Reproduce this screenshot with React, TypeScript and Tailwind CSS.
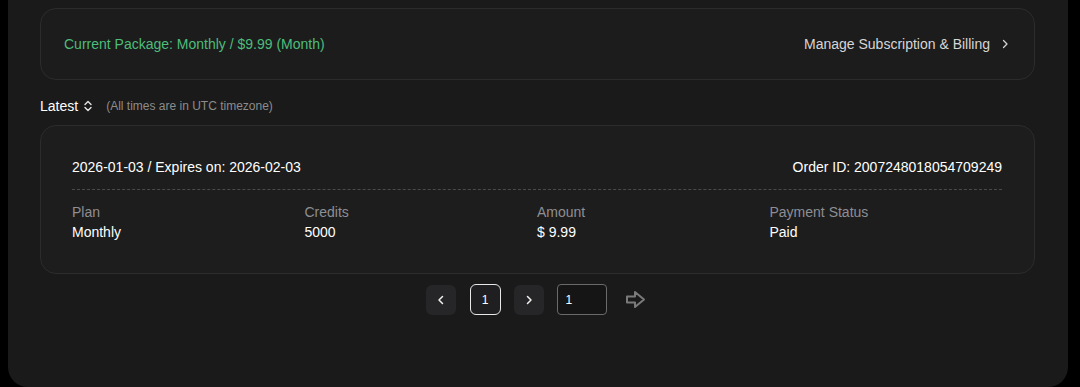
import React from "react";

export default function App() {
  const font = { fontFamily: '"Liberation Sans", Arial, sans-serif' };
  return (
    <div className="w-full h-[387px] bg-black flex overflow-hidden" style={font}>
      <div className="ml-[8px] w-[1060px] h-[387px] bg-[#1a1a1a] rounded-b-[20px] pl-[32px] pr-[33px] pt-[8px]">
        {/* Current package card */}
        <div className="h-[72px] rounded-[16px] border border-[#2c2c2c] bg-[#1c1c1c] flex items-center justify-between pl-[23px] pr-[23px]">
          <span className="text-[14px] text-[#4dbd7b]">Current Package: Monthly / $9.99 (Month)</span>
          <div className="flex items-center gap-[9px] text-[14px] text-[#d6d6d6]">
            <span>Manage Subscription &amp; Billing</span>
            <svg width="12" height="12" viewBox="0 0 24 24" fill="none" stroke="#d6d6d6" strokeWidth="2.5" strokeLinecap="round" strokeLinejoin="round">
              <path d="M9 5l7 7-7 7" />
            </svg>
          </div>
        </div>

        {/* Latest row */}
        <div className="mt-[17px] h-[18px] flex items-center">
          <span className="text-[14px] text-white">Latest</span>
          <svg className="ml-[5px]" width="10" height="12" viewBox="0 0 10 12" fill="none" stroke="#e5e5e5" strokeWidth="1.4" strokeLinecap="round" strokeLinejoin="round">
            <path d="M2 4.5L5 1.5L8 4.5" />
            <path d="M2 7.5L5 10.5L8 7.5" />
          </svg>
          <span className="ml-[13px] text-[12px] text-[#8c8c8c]">(All times are in UTC timezone)</span>
        </div>

        {/* Order card */}
        <div className="mt-[10px] rounded-[16px] border border-[#2c2c2c] bg-[#1d1d1d] pl-[31px] pr-[32px] pt-[31px] pb-[31px]">
          <div className="h-[20px] flex items-center justify-between text-[14px] text-white">
            <span>2026-01-03 / Expires on: 2026-02-03</span>
            <span>Order ID: 2007248018054709249</span>
          </div>
          <div className="mt-[12px] border-t border-dashed border-[#4a4a4a]" />
          <div className="mt-[12px] grid grid-cols-4 text-[14px] leading-[20px]">
            {[
              ["Plan", "Monthly"],
              ["Credits", "5000"],
              ["Amount", "$ 9.99"],
              ["Payment Status", "Paid"],
            ].map(([l, v]) => (
              <div key={l} className="flex flex-col">
                <span className="text-[#8e8e93]">{l}</span>
                <span className="text-white">{v}</span>
              </div>
            ))}
          </div>
        </div>

        {/* Pagination */}
        <div className="mt-[10px] pr-[4px] flex items-center justify-center">
          <button className="w-[30px] h-[30px] rounded-[6px] bg-[#262628] flex items-center justify-center">
            <svg width="12" height="12" viewBox="0 0 24 24" fill="none" stroke="#f0f0f0" strokeWidth="3" strokeLinecap="round" strokeLinejoin="round">
              <path d="M15 5l-7 7 7 7" />
            </svg>
          </button>
          <button className="ml-[14px] w-[31px] h-[31px] rounded-[6px] border-[1.5px] border-[#e8e8e8] bg-[#1f1f22] text-white text-[12px] flex items-center justify-center">
            1
          </button>
          <button className="ml-[13px] w-[30px] h-[30px] rounded-[6px] bg-[#262628] flex items-center justify-center">
            <svg width="12" height="12" viewBox="0 0 24 24" fill="none" stroke="#f0f0f0" strokeWidth="3" strokeLinecap="round" strokeLinejoin="round">
              <path d="M9 5l7 7-7 7" />
            </svg>
          </button>
          <div className="ml-[13px] w-[50px] h-[31px] rounded-[4px] border border-[#6a6a6a] bg-[#151515] flex items-center pl-[8px] text-[12px] text-white">
            1
          </div>
          <svg className="ml-[18px]" width="21" height="19" viewBox="0 0 21 19" fill="none" stroke="#7a7a7a" strokeWidth="2" strokeLinejoin="round">
            <path d="M2 6.5H10V2L19 9.5L10 17V12.5H2Z" />
          </svg>
        </div>
      </div>
    </div>
  );
}
